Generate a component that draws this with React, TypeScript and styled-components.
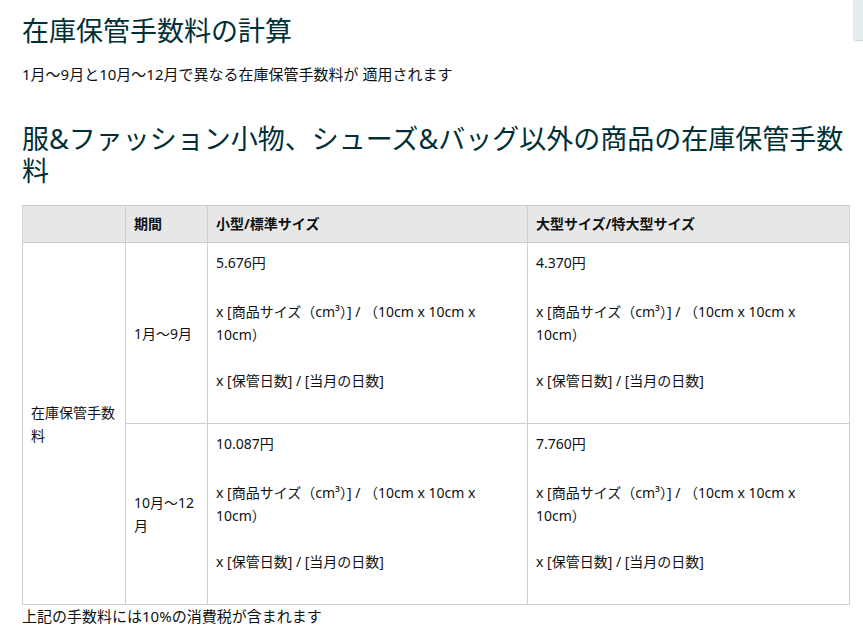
import React from "react";
import styled, { createGlobalStyle } from "styled-components";

const GlobalStyle = createGlobalStyle`
  html, body {
    margin: 0;
    padding: 0;
    background: #ffffff;
    overflow: hidden;
  }
  body {
    font-family: "Noto Sans", "Noto Sans CJK JP", sans-serif;
    color: #0f1111;
  }
`;

const Page = styled.div`
  display: grid;
  grid-template-columns: 849px 1fr;
  column-gap: 4px;
  align-items: start;
`;

const Main = styled.main`
  padding-left: 22px;
`;

const SideTab = styled.aside`
  height: 40px;
  background: #e4ecee;
  border-bottom-left-radius: 4px;
  box-shadow: 0 1px 1px rgba(0, 0, 0, 0.18);
`;

const PageTitle = styled.h1`
  margin: 13px 0 0;
  font-size: 27px;
  line-height: 36px;
  font-weight: 400;
  color: #002f36;
`;

const Lead = styled.p`
  margin: 14px 0 0;
  font-size: 15px;
  line-height: 23px;
`;

const SectionTitle = styled.h2`
  margin: 37px 0 0;
  font-size: 27px;
  line-height: 32px;
  font-weight: 400;
  color: #002f36;
`;

const FeeTable = styled.table`
  margin-top: 18px;
  width: 100%;
  table-layout: fixed;
  border-collapse: collapse;
  font-size: 14px;
  line-height: 20px;
`;

const Col = styled.col<{ $w: number }>`
  width: ${({ $w }) => $w}px;
`;

const HeadCell = styled.th`
  background: #e7e7e7;
  border: 1px solid #cfcfcf;
  padding: 8px;
  text-align: left;
  font-weight: 700;
  vertical-align: middle;
`;

const BodyCell = styled.td<{ $middle?: boolean }>`
  border: 1px solid #cfcfcf;
  padding: 8px;
  line-height: 23px;
  vertical-align: ${({ $middle }) => ($middle ? "middle" : "top")};
`;

// the line holding the cm³ superscript sits a little lower, as in the original
const Line = styled.div<{ $raised?: boolean }>`
  min-height: 23px;
  padding-top: ${({ $raised }) => ($raised ? "3px" : "0")};
`;

const Note = styled.p`
  margin: 0;
  font-size: 15px;
  line-height: 23px;
`;

type FeeRow = {
  period: string;
  standard: string;
  oversize: string;
};

const rows: FeeRow[] = [
  { period: "1月～9月", standard: "5.676円", oversize: "4.370円" },
  { period: "10月～12月", standard: "10.087円", oversize: "7.760円" },
];

const FeeFormula = ({ amount }: { amount: string }) => (
  <>
    <Line>{amount}</Line>
    <Line />
    <Line $raised>x [商品サイズ（cm³）] / （10cm x 10cm x 10cm）</Line>
    <Line />
    <Line>x [保管日数] / [当月の日数]</Line>
    <Line />
  </>
);

export default function App() {
  return (
    <Page>
      <GlobalStyle />
      <Main>
        <PageTitle>在庫保管手数料の計算</PageTitle>
        <Lead>1月～9月と10月～12月で異なる在庫保管手数料が 適用されます</Lead>

        <SectionTitle>
          服&amp;ファッション小物、シューズ&amp;バッグ以外の商品の在庫保管手数料
        </SectionTitle>

        <FeeTable>
          <colgroup>
            <Col $w={103} />
            <Col $w={82} />
            <Col $w={320} />
            <Col $w={322} />
          </colgroup>
          <thead>
            <tr>
              <HeadCell />
              <HeadCell>期間</HeadCell>
              <HeadCell>小型/標準サイズ</HeadCell>
              <HeadCell>大型サイズ/特大型サイズ</HeadCell>
            </tr>
          </thead>
          <tbody>
            {rows.map((row, i) => (
              <tr key={row.period}>
                {i === 0 && (
                  <BodyCell $middle rowSpan={rows.length}>
                    在庫保管手数料
                  </BodyCell>
                )}
                <BodyCell $middle>{row.period}</BodyCell>
                <BodyCell>
                  <FeeFormula amount={row.standard} />
                </BodyCell>
                <BodyCell>
                  <FeeFormula amount={row.oversize} />
                </BodyCell>
              </tr>
            ))}
          </tbody>
        </FeeTable>

        <Note>上記の手数料には10%の消費税が含まれます</Note>
      </Main>
      <SideTab />
    </Page>
  );
}
